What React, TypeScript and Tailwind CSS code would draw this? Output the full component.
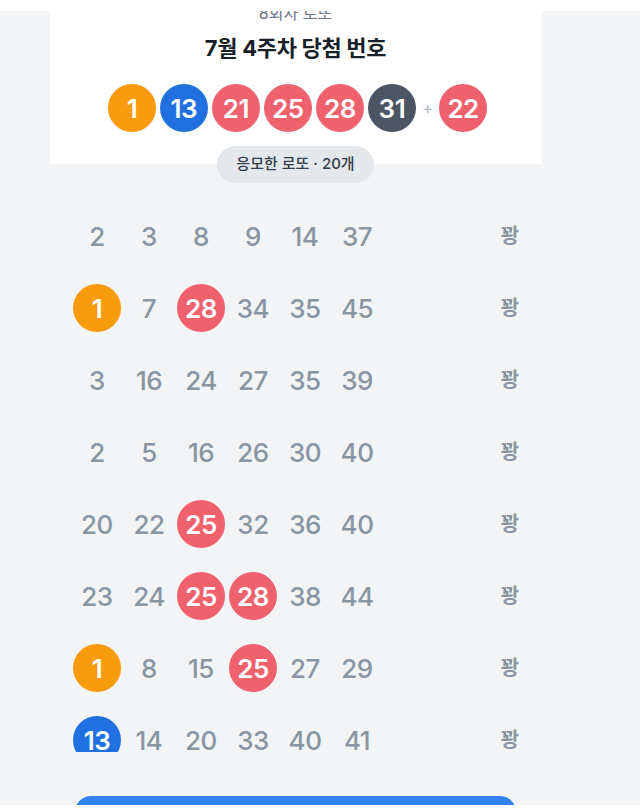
import React from "react";

const FONT = { fontFamily: 'Inter, "Noto Sans CJK KR", "Noto Sans", sans-serif' };

const winning = [1, 13, 21, 25, 28, 31];
const bonus = 22;

const rows: number[][] = [
  [2, 3, 8, 9, 14, 37],
  [1, 7, 28, 34, 35, 45],
  [3, 16, 24, 27, 35, 39],
  [2, 5, 16, 26, 30, 40],
  [20, 22, 25, 32, 36, 40],
  [23, 24, 25, 28, 38, 44],
  [1, 8, 15, 25, 27, 29],
  [13, 14, 20, 33, 40, 41],
];

function ballClass(n: number): string {
  if (n <= 10) return "bg-[#f89b0c]";
  if (n <= 20) return "bg-[#2070e2]";
  if (n <= 30) return "bg-[#f0616e]";
  if (n <= 40) return "bg-[#4b5563]";
  return "bg-[#3fb56b]";
}

function Ball({ n }: { n: number }) {
  return (
    <div
      className={`w-[48px] h-[48px] shrink-0 rounded-full flex items-center justify-center text-white text-[26px] font-semibold tracking-[-0.5px] ${ballClass(n)}`}
    >
      {n}
    </div>
  );
}

export default function App() {
  return (
    <div className="relative w-[640px] h-[810px] overflow-hidden bg-[#f3f4f6]" style={FONT}>
      {/* top header overlay */}
      <div className="absolute top-0 left-0 right-0 h-[11px] bg-white z-10" />
      {/* bottom overlay */}
      <div className="absolute bottom-0 left-0 right-0 h-[5px] bg-white z-10" />

      <div className="ml-[50px] w-[492px] h-full overflow-hidden flex flex-col bg-[#f2f4f6] border-r border-[#f8f9fa]">
        {/* white section */}
        <div className="shrink-0 bg-white flex flex-col items-center pt-[3px] h-[164px]">
          <div className="text-[16px] leading-[20px] text-[#6b7684]">8회차 로또</div>
          <div className="mt-[11px] text-[22px] leading-[28px] font-bold text-[#191f28] tracking-[-0.3px]">
            7월 4주차 당첨 번호
          </div>
          <div className="mt-[22px] ml-[4px] flex items-center gap-[4px]">
            {winning.map((n) => (
              <Ball key={n} n={n} />
            ))}
            <span className="mx-[2px] text-[17px] leading-none text-[#b0b8c1]">+</span>
            <Ball n={bonus} />
          </div>
        </div>

        {/* pill */}
        <div className="shrink-0 flex justify-center -mt-[18px]">
          <div className="h-[37px] px-[19px] rounded-full bg-[#e5e8eb] flex items-center text-[15px] font-medium text-[#333d4b]">
            응모한 로또 · 20개
          </div>
        </div>

        {/* list */}
        <div className="shrink-0 h-[569px] overflow-hidden pt-[29px] flex flex-col gap-[24px]">
          {rows.map((row, i) => (
            <div key={i} className="flex items-center pl-[21px] pr-[22px] h-[48px] shrink-0">
              {row.map((n, j) => (
                <div key={j} className="w-[52px] flex justify-center">
                  {winning.includes(n) ? (
                    <Ball n={n} />
                  ) : (
                    <span className="text-[26px] font-medium text-[#8b95a1] tracking-[-0.5px]">{n}</span>
                  )}
                </div>
              ))}
              <span className="ml-auto text-[20px] font-semibold text-[#8b95a1]">꽝</span>
            </div>
          ))}
        </div>

        {/* button area */}
        <div className="shrink-0 pt-[44px] px-[25px]">
          <div className="h-[56px] rounded-[16px] bg-[#3182f6]" />
        </div>
      </div>
    </div>
  );
}
